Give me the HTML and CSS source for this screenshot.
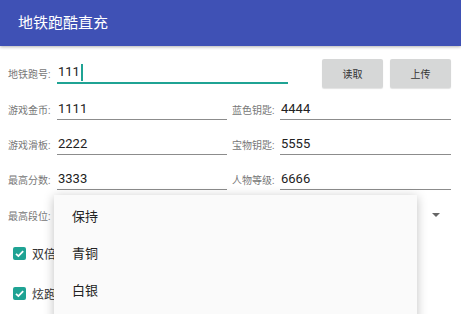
FILE: index.html
```html
<!DOCTYPE html>
<html lang="zh">
<head>
    <meta charset="UTF-8">
    <meta name="viewport" content="width=device-width, initial-scale=1.0">
    <title>地铁跑酷直充</title>
    <link rel="stylesheet" href="styles.css">
</head>
<body>
    <div class="appbar">地铁跑酷直充</div>
    <div class="content">
        <div class="row-top">
            <span class="label">地铁跑号:</span>
            <div class="field focused"><span class="value">111</span><span class="cursor"></span></div>
            <button class="btn">读取</button>
            <button class="btn">上传</button>
        </div>
        <div class="grid">
            <div class="cell"><span class="label">游戏金币:</span><div class="field"><span class="value">1111</span></div></div>
            <div class="cell"><span class="label">蓝色钥匙:</span><div class="field"><span class="value">4444</span></div></div>
            <div class="cell"><span class="label">游戏滑板:</span><div class="field"><span class="value">2222</span></div></div>
            <div class="cell"><span class="label">宝物钥匙:</span><div class="field"><span class="value">5555</span></div></div>
            <div class="cell"><span class="label">最高分数:</span><div class="field"><span class="value">3333</span></div></div>
            <div class="cell"><span class="label">人物等级:</span><div class="field"><span class="value">6666</span></div></div>
        </div>
        <div class="row-spinner">
            <span class="label">最高段位:</span>
            <span class="arrow"></span>
        </div>
        <div class="check-row">
            <span class="checkbox"><svg width="13" height="13" viewBox="0 0 13 13"><path d="M3 6.8 L5.4 9.1 L10.2 4.2" fill="none" stroke="#fff" stroke-width="1.8"/></svg></span>
            <span class="check-text">双倍金币</span>
        </div>
        <div class="check-row">
            <span class="checkbox"><svg width="13" height="13" viewBox="0 0 13 13"><path d="M3 6.8 L5.4 9.1 L10.2 4.2" fill="none" stroke="#fff" stroke-width="1.8"/></svg></span>
            <span class="check-text">炫跑模式</span>
        </div>
    </div>
    <div class="popup">
        <div class="item">保持</div>
        <div class="item">青铜</div>
        <div class="item">白银</div>
    </div>
</body>
</html>
```

FILE: styles.css
```css
body {
    margin: 0;
    font-family: Roboto, "Noto Sans CJK SC", sans-serif;
    background: #ffffff;
    color: #333;
    overflow: hidden;
    height: 314px;
    position: relative;
}
.appbar {
    height: 46px;
    line-height: 46px;
    padding-left: 18px;
    background-color: #3f51b5;
    color: #ffffff;
    font-size: 15px;
    box-shadow: 0 1px 3px rgba(0, 0, 0, 0.3);
}
.content {
    padding: 8px 10px 0 8px;
}
.label {
    font-size: 10px;
    color: #777;
    width: 49px;
    flex: none;
    white-space: nowrap;
}
.row-top {
    display: flex;
    align-items: center;
    height: 38px;
}
.field {
    flex: 1;
    height: 20px;
    line-height: 20px;
    border-bottom: 1px solid #8c8c8c;
    display: flex;
    align-items: center;
}
.field.focused {
    border-bottom: 2px solid #1fa394;
    margin-right: 34px;
    height: 19px;
}
.value {
    font-size: 13px;
    color: #222;
    padding-left: 1px;
}
.cursor {
    width: 2px;
    height: 17px;
    background: #1fa394;
    margin-left: 1px;
}
.btn {
    width: 61px;
    height: 29px;
    margin-left: 7px;
    border: none;
    border-radius: 2px;
    background-color: #d6d7d7;
    color: #333;
    font-family: inherit;
    font-size: 10px;
    box-shadow: 0 1px 1px rgba(0, 0, 0, 0.12);
}
.btn:first-of-type {
    margin-left: 0;
}
.grid {
    display: grid;
    grid-template-columns: 1fr 1fr;
    column-gap: 5px;
}
.cell {
    display: flex;
    align-items: center;
    height: 35px;
}
.cell:nth-child(even) .label {
    width: 48px;
}
.row-spinner {
    display: flex;
    align-items: center;
    justify-content: space-between;
    height: 36px;
}
.arrow {
    width: 0;
    height: 0;
    border-left: 4px solid transparent;
    border-right: 4px solid transparent;
    border-top: 4px solid #666;
    margin-right: 11px;
}
.check-row {
    display: flex;
    align-items: center;
    height: 40px;
    padding-left: 5px;
}
.checkbox {
    width: 13px;
    height: 13px;
    border-radius: 2px;
    background-color: #1fa394;
    display: flex;
}
.check-text {
    margin-left: 6px;
    font-size: 12px;
    color: #333;
}
.popup {
    position: absolute;
    left: 54px;
    top: 195px;
    width: 363px;
    height: 140px;
    padding-top: 3px;
    background-color: #fafafa;
    box-shadow: 0 2px 10px rgba(0, 0, 0, 0.25);
}
.item {
    height: 37px;
    line-height: 37px;
    padding-left: 18px;
    font-size: 13px;
    color: #222;
}
```
